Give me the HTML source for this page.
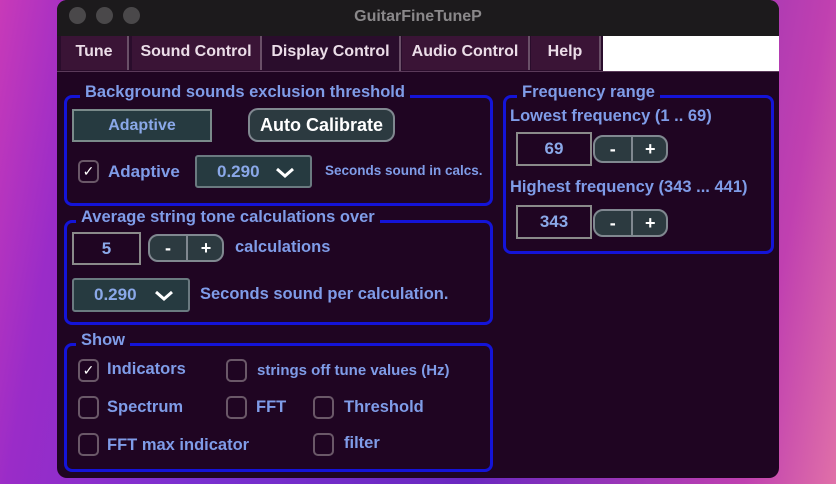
<!DOCTYPE html><html><head><style>
body{margin:0;width:836px;height:484px;overflow:hidden;position:relative;font-family:"Liberation Sans",sans-serif;
background:linear-gradient(100deg,#c83ab8 0%,#9a2cc8 10%,#7a30d0 30%,#6a28c0 60%,#c040b0 90%,#e070a8 100%);}
.a{position:absolute}
.win{left:57px;top:0;width:722px;height:478px;background:#1f0522;border-radius:10px;overflow:hidden}
.title{left:0;top:0;width:722px;height:36px;background:#1c1a1c}
.dot{width:17px;height:17px;border-radius:50%;background:#4a484a;top:7px}
.tabs{left:0;top:36px;width:722px;height:35px;background:#2a0d2c;border-bottom:1px solid #5a3a5a}
.tab{top:0;height:34px;line-height:32px;color:#ebdde8;font-size:16px;font-weight:bold;text-align:center;background:#3a1436;border-right:2px solid #6a5068;box-sizing:border-box}
.grp{border:3px solid #1414d8;border-radius:8px;box-sizing:border-box}
.lg{color:#7f9ce8;font-size:16.5px;font-weight:bold;background:#1f0522;padding:0 5px;white-space:nowrap}
.t{color:#7f9ce8;font-size:16.5px;font-weight:bold;white-space:nowrap}
.box{border:2px solid #8a8a8a;box-sizing:border-box;color:#8aa8e8;font-size:17px;font-weight:bold;text-align:center}
.pm{border:2px solid #808890;border-radius:10px;background:#2c3a40;box-sizing:border-box;color:#fff;font-weight:bold;font-size:18px}
.pm span{position:absolute;top:0;width:50%;text-align:center;line-height:24px}
.dd{border:2px solid #6a7a80;border-radius:3px;background:#263a40;box-sizing:border-box;color:#8aa8e8;font-size:17px;font-weight:bold}
.dd svg{position:absolute;top:10px}
.cb{width:21px;height:23px;border:2px solid #6a5868;border-radius:5px;box-sizing:border-box;color:#fff;font-size:14px;text-align:center;line-height:19px}
</style></head><body>
<div class="a win">
<div class="a title"><div class="a dot" style="left:12px"></div><div class="a dot" style="left:39px"></div><div class="a dot" style="left:66px"></div>
<div class="a" style="left:0;width:722px;top:8px;text-align:center;color:#8a888a;font-weight:bold;font-size:16px">GuitarFineTuneP</div></div>
<div class="a tabs">
<div class="a tab" style="left:4px;width:68px">Tune</div>
<div class="a tab" style="left:75px;width:130px">Sound Control</div>
<div class="a tab" style="left:205px;width:139px;background:#2a0d2c;height:35px">Display Control</div>
<div class="a tab" style="left:345px;width:128px">Audio Control</div>
<div class="a tab" style="left:474px;width:70px">Help</div>
<div class="a" style="left:546px;top:0;width:176px;height:35px;background:#fff"></div>
</div>
</div>
<!-- group 1 -->
<div class="a grp" style="left:64px;top:95px;width:429px;height:111px"></div>
<div class="a lg" style="left:80px;top:83px">Background sounds exclusion threshold</div>
<div class="a box" style="left:72px;top:109px;width:140px;height:33px;background:#263a40;border-color:#7a8a8a;line-height:29px;font-size:16px">Adaptive</div>
<div class="a pm" style="left:248px;top:108px;width:147px;height:34px;line-height:30px;text-align:center">Auto Calibrate</div>
<div class="a cb" style="left:78px;top:160px">✓</div>
<div class="a t" style="left:108px;top:162px;font-size:17px">Adaptive</div>
<div class="a dd" style="left:195px;top:155px;width:117px;height:33px;line-height:29px;padding-left:20px">0.290<svg style="left:78px" width="20" height="12" viewBox="0 0 20 12"><path d="M2 2 L10 9 L18 2" stroke="#fff" stroke-width="3" fill="none"/></svg></div>
<div class="a t" style="left:325px;top:163px;font-size:13.5px">Seconds sound in calcs.</div>
<!-- group 2 -->
<div class="a grp" style="left:64px;top:220px;width:429px;height:105px"></div>
<div class="a lg" style="left:76px;top:208px">Average string tone calculations over</div>
<div class="a box" style="left:72px;top:232px;width:69px;height:33px;line-height:29px">5</div>
<div class="a pm" style="left:148px;top:234px;width:76px;height:28px"><span style="left:0">-</span><span style="left:50%;border-left:2px solid #808890">+</span></div>
<div class="a t" style="left:235px;top:238px">calculations</div>
<div class="a dd" style="left:72px;top:278px;width:118px;height:34px;line-height:30px;padding-left:20px">0.290<svg style="left:80px" width="20" height="12" viewBox="0 0 20 12"><path d="M2 2 L10 9 L18 2" stroke="#fff" stroke-width="3" fill="none"/></svg></div>
<div class="a t" style="left:200px;top:285px">Seconds sound per calculation.</div>
<!-- group 3 -->
<div class="a grp" style="left:64px;top:343px;width:429px;height:129px"></div>
<div class="a lg" style="left:76px;top:331px">Show</div>
<div class="a cb" style="left:78px;top:359px">✓</div><div class="a t" style="left:107px;top:360px">Indicators</div>
<div class="a cb" style="left:226px;top:359px"></div><div class="a t" style="left:257px;top:362px;font-size:15px">strings off tune values (Hz)</div>
<div class="a cb" style="left:78px;top:396px"></div><div class="a t" style="left:107px;top:398px">Spectrum</div>
<div class="a cb" style="left:226px;top:396px"></div><div class="a t" style="left:256px;top:398px">FFT</div>
<div class="a cb" style="left:313px;top:396px"></div><div class="a t" style="left:344px;top:398px">Threshold</div>
<div class="a cb" style="left:78px;top:433px"></div><div class="a t" style="left:107px;top:436px">FFT max indicator</div>
<div class="a cb" style="left:313px;top:433px"></div><div class="a t" style="left:344px;top:434px">filter</div>
<!-- freq -->
<div class="a grp" style="left:503px;top:95px;width:271px;height:159px"></div>
<div class="a lg" style="left:517px;top:83px">Frequency range</div>
<div class="a t" style="left:510px;top:107px">Lowest frequency (1 .. 69)</div>
<div class="a box" style="left:516px;top:132px;width:76px;height:34px;line-height:30px">69</div>
<div class="a pm" style="left:593px;top:135px;width:75px;height:28px"><span style="left:0">-</span><span style="left:50%;border-left:2px solid #808890">+</span></div>
<div class="a t" style="left:510px;top:178px">Highest frequency (343 ... 441)</div>
<div class="a box" style="left:516px;top:205px;width:76px;height:34px;line-height:30px">343</div>
<div class="a pm" style="left:593px;top:209px;width:75px;height:28px"><span style="left:0">-</span><span style="left:50%;border-left:2px solid #808890">+</span></div>
</body></html>
